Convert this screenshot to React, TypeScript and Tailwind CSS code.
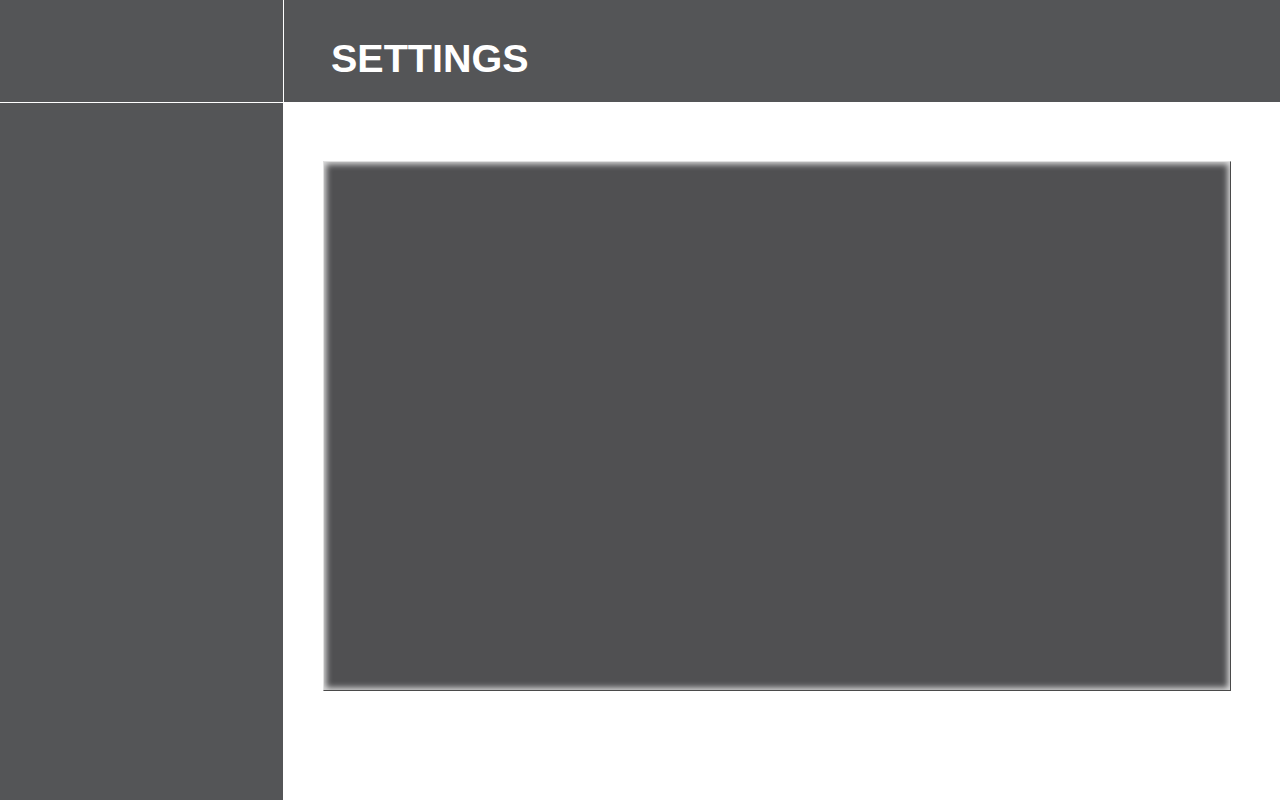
export default function App() {
  return (
    <div className="flex h-[800px] w-[1280px] overflow-hidden bg-white font-['Liberation_Sans',Arial,sans-serif]">
      {/* sidebar */}
      <aside className="flex w-[283px] shrink-0 flex-col bg-[#545557]">
        <div className="h-[103px] border-b border-white" />
      </aside>

      {/* main */}
      <div className="ml-px flex flex-1 flex-col">
        <header className="h-[102px] bg-[#545557] pl-[47px] pt-[39px]">
          <h1 className="text-[39.5px] font-bold leading-none text-white">SETTINGS</h1>
        </header>

        <main className="pl-[39px] pt-[59px]">
          <div className="h-[530px] w-[908px] border border-b-[#4a4a4a] border-l-[#e0e0e0] border-r-[#4a4a4a] border-t-[#e0e0e0] bg-[#505052] shadow-[inset_0_0_6px_2px_rgba(255,255,255,0.85)]" />
        </main>
      </div>
    </div>
  );
}
